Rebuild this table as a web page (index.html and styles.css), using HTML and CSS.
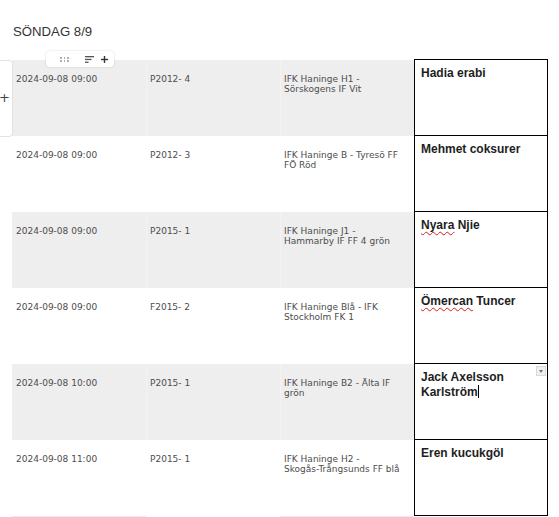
FILE: index.html
```html
<!DOCTYPE html>
<html lang="sv">
<head>
<meta charset="utf-8">
<title>Söndag 8/9</title>
<link rel="stylesheet" href="styles.css">
</head>
<body>
<div class="page">
  <h2 class="day">SÖNDAG 8/9</h2>
  <div class="table">
    <div class="row alt">
      <div class="cell">2024-09-08 09:00</div>
      <div class="cell sep">P2012- 4</div>
      <div class="cell sep">IFK Haninge H1 - Sörskogens IF Vit</div>
      <div class="name first">Hadia erabi</div>
    </div>
    <div class="row">
      <div class="cell">2024-09-08 09:00</div>
      <div class="cell sep">P2012- 3</div>
      <div class="cell sep">IFK Haninge B - Tyresö FF FÖ Röd</div>
      <div class="name">Mehmet coksurer</div>
    </div>
    <div class="row alt">
      <div class="cell">2024-09-08 09:00</div>
      <div class="cell sep">P2015- 1</div>
      <div class="cell sep">IFK Haninge J1 - Hammarby IF FF 4 grön</div>
      <div class="name"><span class="spell">Nyara</span> Njie</div>
    </div>
    <div class="row">
      <div class="cell">2024-09-08 09:00</div>
      <div class="cell sep">F2015- 2</div>
      <div class="cell sep">IFK Haninge Blå - IFK Stockholm FK 1</div>
      <div class="name"><span class="spell">Ömercan</span> Tuncer</div>
    </div>
    <div class="row alt">
      <div class="cell">2024-09-08 10:00</div>
      <div class="cell sep">P2015- 1</div>
      <div class="cell sep">IFK Haninge B2 - Älta IF grön</div>
      <div class="name editing">Jack Axelsson Karlström<span class="caret"></span><span class="drop"></span></div>
    </div>
    <div class="row">
      <div class="cell">2024-09-08 11:00</div>
      <div class="cell sep">P2015- 1</div>
      <div class="cell sep">IFK Haninge H2 - <span class="nowrap">Skogås-Trångsunds</span> FF blå</div>
      <div class="name">Eren kucukgöl</div>
    </div>
    <div class="row tail">
      <div class="cell alt-bg"></div>
      <div class="cell"></div>
      <div class="cell alt-bg"></div>
      <div class="blank"></div>
    </div>
  </div>

  <div class="side-panel"><span class="side-plus">+</span></div>

  <div class="toolbar">
    <span class="grip"><i></i><i></i><i></i><i></i><i></i><i></i></span>
    <svg class="sort" width="9" height="7" viewBox="0 0 9 7"><rect x="0" y="0" width="9" height="1.3" fill="#555"/><rect x="0" y="2.8" width="6.5" height="1.3" fill="#555"/><rect x="0" y="5.6" width="3.5" height="1.3" fill="#555"/></svg>
    <svg class="plus" width="7" height="7" viewBox="0 0 7 7"><rect x="0" y="2.8" width="7" height="1.4" fill="#333"/><rect x="2.8" y="0" width="1.4" height="7" fill="#333"/></svg>
  </div>
</div>
</body>
</html>
```
FILE: styles.css
```css
html, body {
  margin: 0;
  padding: 0;
  background: #ffffff;
}

.page {
  position: relative;
  padding-top: 24px;
  font-family: "DejaVu Sans", Verdana, sans-serif;
}

.day {
  margin: 0 0 21px 13px;
  font-family: "Liberation Sans", Arial, sans-serif;
  font-weight: normal;
  font-size: 13.2px;
  line-height: 15px;
  color: #333333;
}

.table {
  margin-left: 12px;
  width: 536px;
}

.row {
  display: grid;
  grid-template-columns: 134px 134px 134px 134px;
  height: 76px;
}

.row.alt .cell {
  background: #eeeeee;
}

.row.alt .cell.sep {
  border-left: 1px solid #f3f3f3;
}

.cell {
  box-sizing: border-box;
  padding: 14px 8px 0 4px;
  font-size: 9px;
  line-height: 10px;
  color: #4d4d4d;
}

.cell.sep {
  border-left: 1px solid transparent;
  padding-left: 3px;
}

.cell.alt-bg {
  background: #ececec;
}

.nowrap {
  white-space: nowrap;
}

.name {
  position: relative;
  box-sizing: border-box;
  background: #ffffff;
  border-left: 1px solid #000000;
  border-right: 1px solid #000000;
  border-bottom: 1px solid #000000;
  padding: 6px 14px 0 6px;
  font-family: "Liberation Sans", Arial, sans-serif;
  font-weight: bold;
  font-size: 12px;
  line-height: 15px;
  color: #1e1e1e;
}

.name.first {
  box-shadow: 0 -1px 0 0 #000000;
}

.spell {
  text-decoration: underline wavy #d42020;
  text-decoration-thickness: 1px;
  text-underline-offset: 2px;
}

.caret {
  display: inline-block;
  width: 1px;
  height: 13px;
  background: #000000;
  vertical-align: -2px;
}

.drop {
  position: absolute;
  top: 2px;
  right: 1px;
  width: 10px;
  height: 10px;
  box-sizing: border-box;
  background: #f0f0f0;
  border: 1px solid #d8d8d8;
}

.drop::after {
  content: "";
  position: absolute;
  left: 2px;
  top: 3px;
  border-left: 2.5px solid transparent;
  border-right: 2.5px solid transparent;
  border-top: 3px solid #777777;
}

.side-panel {
  position: absolute;
  left: -10px;
  top: 60px;
  width: 21px;
  height: 75px;
  background: #ffffff;
  border: 1px solid #e2e2e2;
  border-radius: 4px;
}

.side-plus {
  position: absolute;
  left: 8px;
  top: 29px;
  font-family: "DejaVu Sans", sans-serif;
  font-size: 13px;
  line-height: 15px;
  color: #444444;
}

.toolbar {
  position: absolute;
  left: 46px;
  top: 51px;
  width: 68px;
  height: 16px;
  box-sizing: border-box;
  background: #ffffff;
  border-radius: 4px;
  box-shadow: 0 0 2px rgba(0, 0, 0, 0.18);
  display: flex;
  align-items: center;
  padding-left: 14px;
}

.grip {
  display: grid;
  grid-template-columns: repeat(3, 2px);
  grid-template-rows: repeat(2, 1px);
  column-gap: 1.5px;
  row-gap: 2px;
}

.grip i {
  display: block;
  width: 1.5px;
  height: 1.5px;
  background: #b0b0b0;
}

.sort {
  margin-left: 16px;
  display: block;
}

.plus {
  margin-left: 7px;
  display: block;
}
```
